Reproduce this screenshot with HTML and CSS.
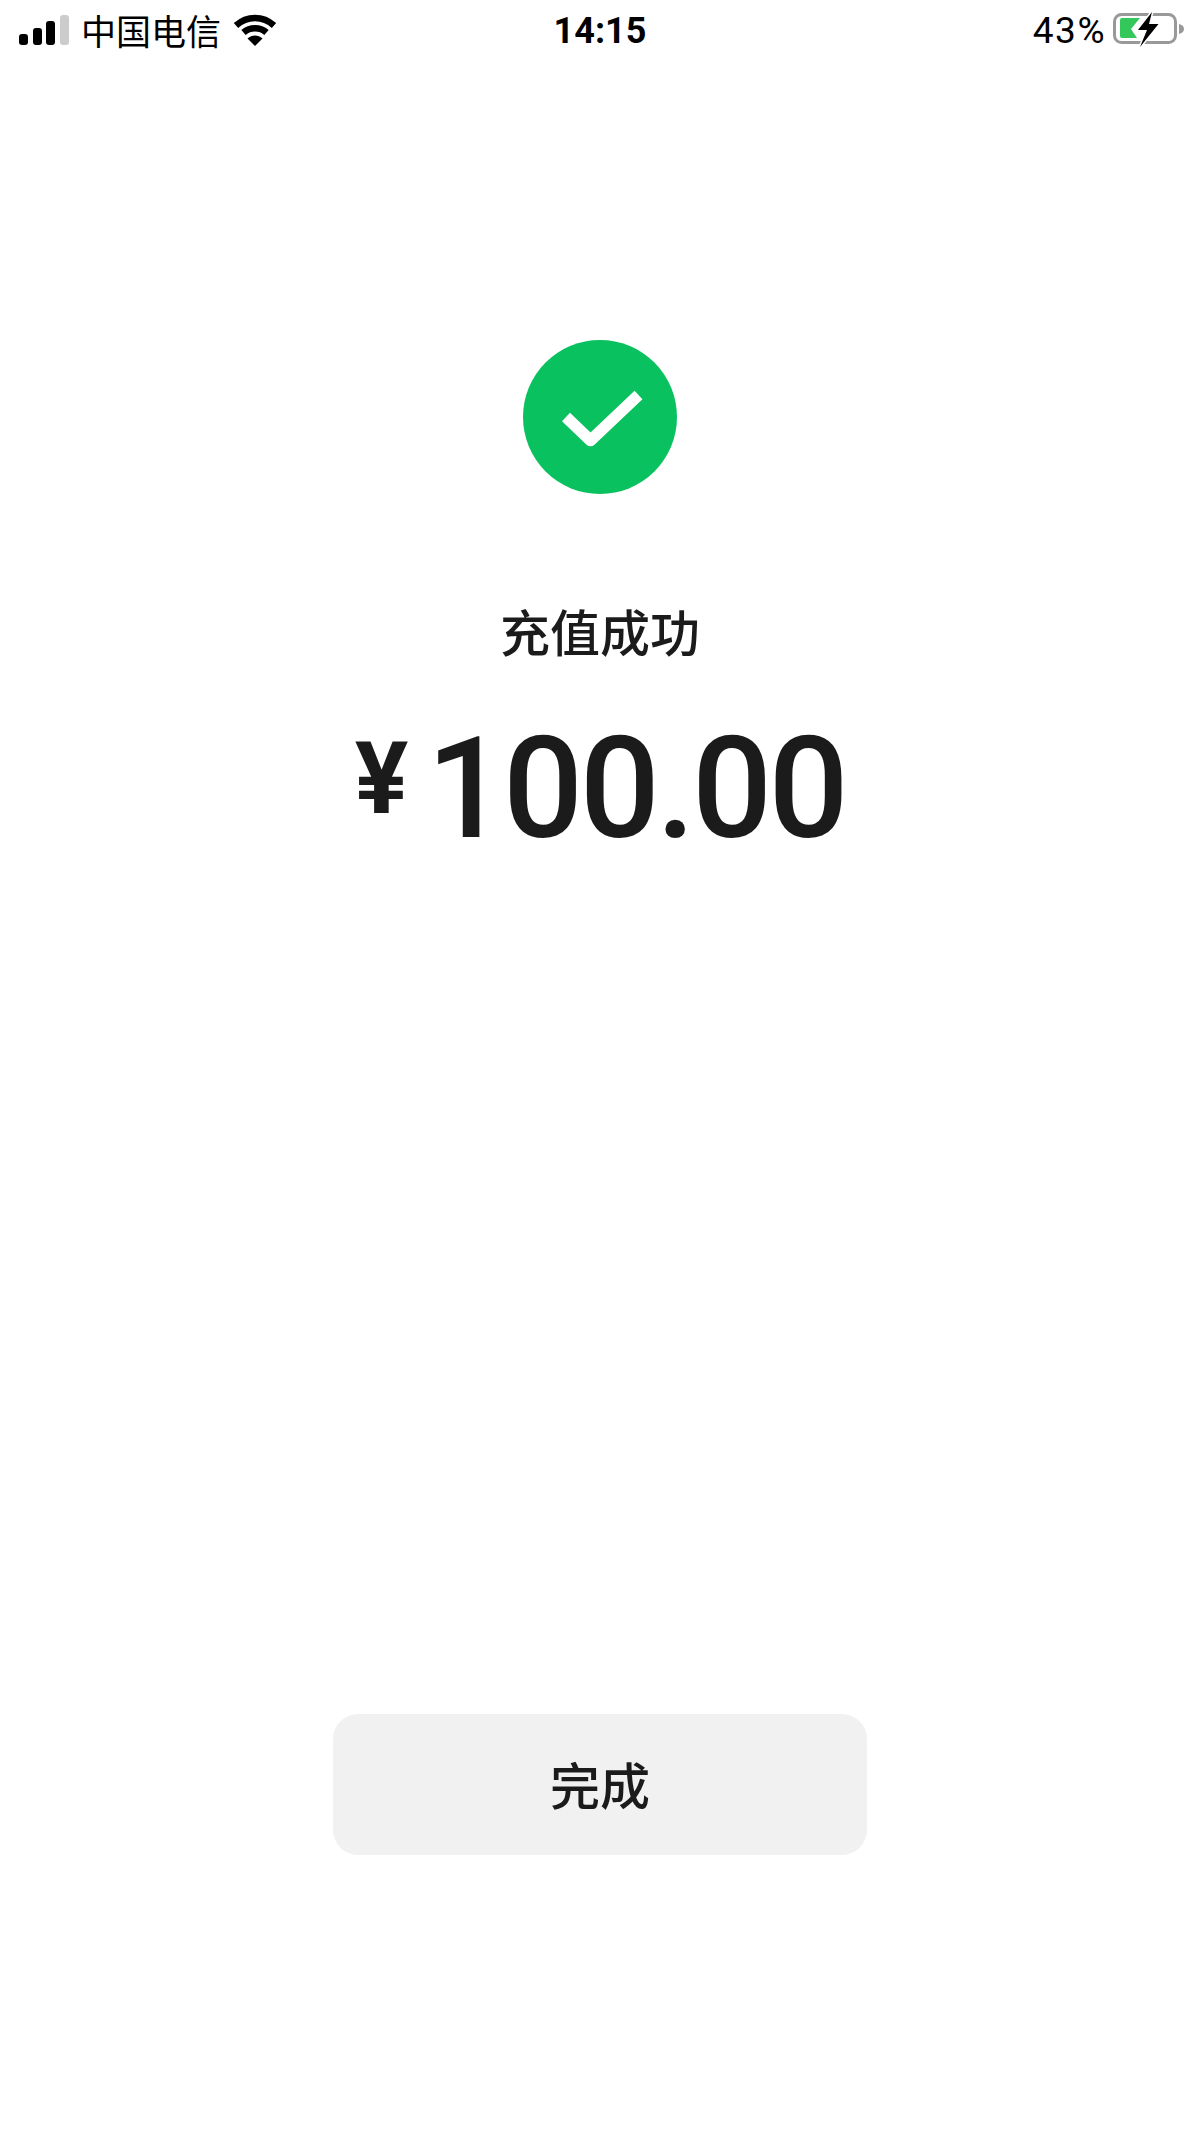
FILE: index.html
```html
<!DOCTYPE html>
<html lang="zh-CN">

<head>
    <meta charset="utf-8">
    <meta name="viewport" content="width=device-width, initial-scale=1.0">
    <title>充值成功</title>
    <link rel="stylesheet" href="styles.css">
</head>

<body>
    <header class="status-bar">
        <div class="status-left">
            <svg class="signal" width="50" height="30" viewBox="0 0 50 30">
                <rect x="0" y="19" width="9" height="11" rx="3" fill="#000"></rect>
                <rect x="14" y="13" width="9" height="17" rx="3" fill="#000"></rect>
                <rect x="27" y="6" width="9" height="24" rx="3" fill="#000"></rect>
                <rect x="41" y="0" width="9" height="30" rx="3" fill="#ccc"></rect>
            </svg>
            <span class="carrier">中国电信</span>
            <svg class="wifi" width="44" height="32" viewBox="0 0 44 32">
                <path d="M3 11.500C14 1.500 30 1.500 41 11.500" fill="none" stroke="#000" stroke-width="6.500"></path>
                <path d="M10.500 18.500C17 12.800 27 12.800 33.500 18.500" fill="none" stroke="#000" stroke-width="6.500"></path>
                <path d="M14.500 24.500C19 20.500 25 20.500 29.500 24.500L22 32Z" fill="#000"></path>
            </svg>
        </div>
        <div class="status-time">14:15</div>
        <div class="status-right">
            <span class="battery-pct">43%</span>
            <svg class="battery" width="72" height="36" viewBox="0 0 72 36">
                <rect x="1.500" y="2.500" width="61" height="28" rx="7" fill="none" stroke="#999" stroke-width="3"></rect>
                <path d="M66 12c3 .5 5 2.500 5 5s-2 4.500-5 5z" fill="#999"></path>
                <path d="M9 6h18l-9 11 6 9H9a2 2 0 0 1-2-2V8a2 2 0 0 1 2-2z" fill="#34c759"></path>
                <path d="M39 0L25 18h9L27 35L45.500 12h-9.500L39 0z" fill="#000" stroke="#fff" stroke-width="3" paint-order="stroke"></path>
            </svg>
        </div>
    </header>

    <main class="result">
        <svg class="success-icon" width="154" height="154" viewBox="0 0 154 154">
            <circle cx="77" cy="77" r="77" fill="#09c15f"></circle>
            <path d="M43 77L67.500 100.500L115.500 55" fill="none" stroke="#fff" stroke-width="11.500" stroke-linejoin="round"></path>
        </svg>
        <h1 class="result-title">充值成功</h1>
        <div class="amount">
            <span class="amount-currency">¥</span>
            <span class="amount-value">100.00</span>
        </div>
        <button class="done-btn" type="button">完成</button>
    </main>
</body>

</html>
```

FILE: styles.css
```css
:root {
    --text: #1b1b1b;
    --cjk: "Noto Sans CJK SC", sans-serif;
}

* {
    box-sizing: border-box;
    margin: 0;
    padding: 0;
}

body {
    height: 2134px;
    background: #fff;
    color: var(--text);
    font-family: Roboto, var(--cjk);
}

.status-bar {
    display: grid;
    grid-template-columns: 1fr auto 1fr;
    align-items: center;
    height: 60px;
    padding: 0 15px;
    color: #000;
}

.status-left,
.status-right {
    display: flex;
    align-items: center;
}

.status-left {
    padding-left: 4px;
}

.status-right {
    justify-content: flex-end;
    gap: 7px;
}

.carrier {
    margin: 0 12px;
    font-family: var(--cjk);
    font-size: 35px;
    line-height: 60px;
}

.status-time {
    padding-top: 1px;
    font-size: 36px;
    font-weight: 700;
}

.battery-pct {
    padding-top: 1px;
    font-size: 37px;
    letter-spacing: 1.500px;
}

.result {
    display: flex;
    flex-direction: column;
    align-items: center;
    padding-top: 280px;
}

.success-icon {
    display: block;
}

.result-title {
    margin-top: 101px;
    font-family: var(--cjk);
    font-size: 50px;
    font-weight: 500;
    line-height: 70px;
}

.amount {
    display: flex;
    align-items: flex-start;
    gap: 18px;
    margin-top: 41px;
    line-height: 165px;
    font-weight: 500;
}

.amount-currency {
    padding-top: 13px;
    font-size: 100px;
    font-weight: 700;
    line-height: 120px;
}

.amount-value {
    font-size: 141px;
    letter-spacing: -3.500px;
}

.done-btn {
    width: 534px;
    height: 141px;
    margin-top: 843px;
    padding-bottom: 4px;
    border: 0;
    border-radius: 25px;
    background: #f1f1f1;
    color: var(--text);
    font-family: var(--cjk);
    font-size: 50px;
    font-weight: 500;
}
```
